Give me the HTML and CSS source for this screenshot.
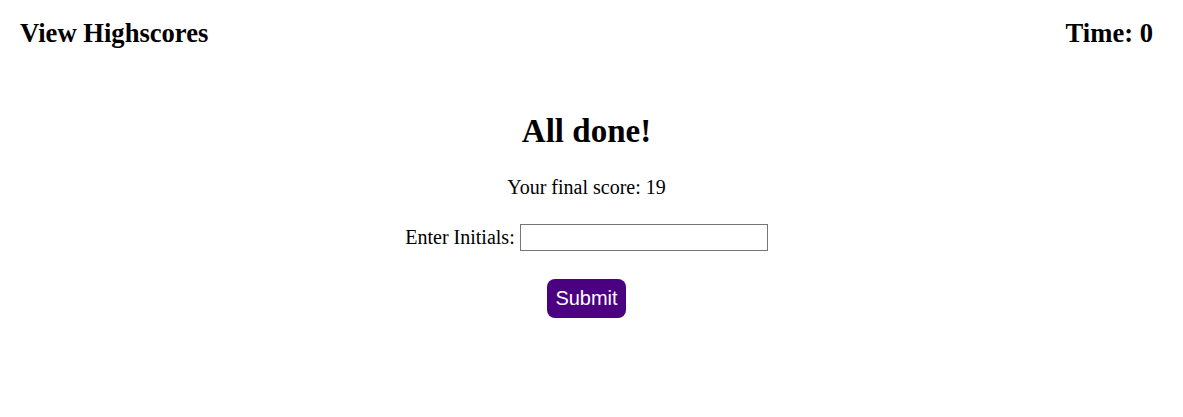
FILE: index.html
```html
<!DOCTYPE html>
<html>
<head>
<meta charset="utf-8">
<link rel="stylesheet" href="styles.css">
</head>
<body>
<div class="page">
  <header class="top">
    <a class="hs">View Highscores</a>
    <div class="timer">Time: 0</div>
  </header>
  <main class="done">
    <h1 class="title">All done!</h1>
    <p class="score">Your final score: 19</p>
    <div class="entry">
      <label for="ini">Enter Initials:</label>
      <input id="ini" type="text" class="ini">
    </div>
    <button class="submit">Submit</button>
  </main>
</div>
</body>
</html>
```
FILE: styles.css
```css
html, body { margin: 0; padding: 0; background: #fff; }
body { font-family: "Liberation Serif", "Times New Roman", serif; color: #000; }
.page { width: 1173px; }
.top {
  display: flex;
  justify-content: space-between;
  align-items: center;
  padding: 18px 20px 0 20px;
  font-size: 26.6px;
  font-weight: bold;
  line-height: 30px;
}
.done {
  display: flex;
  flex-direction: column;
  align-items: center;
  margin-top: 64px;
}
.title { font-size: 33px; margin: 0; line-height: 38px; }
.score { font-size: 20px; margin: 26px 0 0; line-height: 23px; }
.entry { display: flex; align-items: center; gap: 5px; margin-top: 25px; font-size: 20px; }
.ini {
  width: 244px; height: 25px; box-sizing: content-box;
  border: 1px solid #767676; padding: 0 1px; margin: 0;
}
.submit {
  margin-top: 28px;
  background: #4b0082;
  color: #fff;
  border: none;
  border-radius: 8px;
  font-family: "Liberation Sans", Arial, sans-serif;
  font-size: 20px;
  line-height: 23px;
  padding: 8px 8px;
  width: 79px;
}
```
